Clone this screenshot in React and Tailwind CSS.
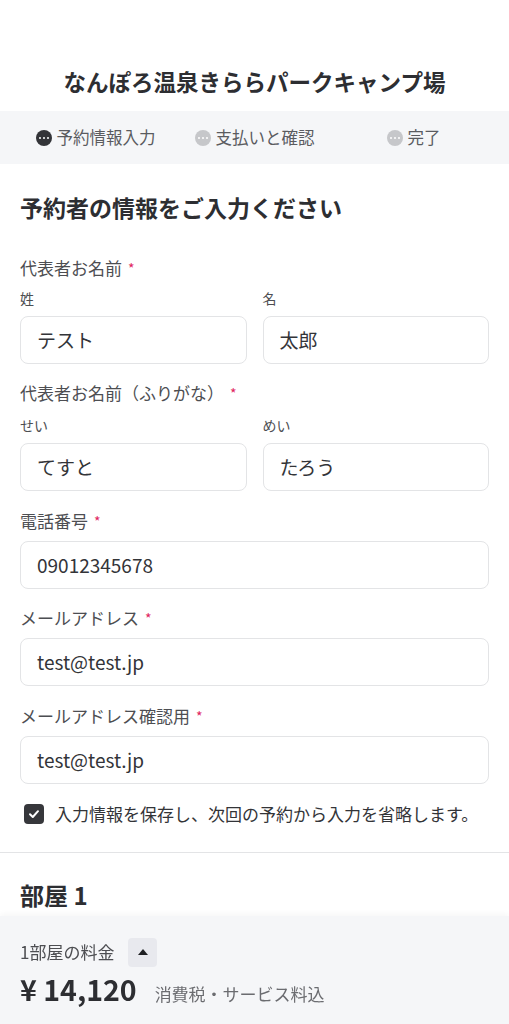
import React from "react";

const font = { fontFamily: '"Noto Sans CJK JP", "Noto Sans", sans-serif' };

function StepIcon({ active }) {
  return (
    <span
      className={
        "flex h-4 w-4 items-center justify-center gap-[2px] rounded-full " +
        (active ? "bg-[#333438]" : "bg-[#c6c7ca]")
      }
    >
      <span className="h-[2px] w-[2px] rounded-full bg-white" />
      <span className="h-[2px] w-[2px] rounded-full bg-white" />
      <span className="h-[2px] w-[2px] rounded-full bg-white" />
    </span>
  );
}

function Label({ children, className = "" }) {
  return (
    <div className={"text-[17px] leading-[24px] text-[#4d4e52] " + className}>
      {children}
      <span className="ml-[6px] text-[14px] align-top text-[#e0245e]">*</span>
    </div>
  );
}

function Input({ value }) {
  return (
    <div className="flex h-[48px] items-center rounded-lg border border-[#e3e4e6] bg-white px-4 text-[19px] text-[#333438]">
      {value}
    </div>
  );
}

function SubField({ label, value }) {
  return (
    <div className="flex-1">
      <div className="mb-[8px] text-[14px] leading-[20px] text-[#4d4e52]">{label}</div>
      <Input value={value} />
    </div>
  );
}

export default function App() {
  return (
    <div className="min-h-screen bg-white pb-[120px]" style={font}>
      <header className="pt-[64px] pb-[13px] text-center text-[22.5px] font-bold leading-[34px] text-[#2d2e32]">
        なんぽろ温泉きららパークキャンプ場
      </header>

      <nav className="grid h-[53px] grid-cols-3 items-center bg-[#f5f6f8] px-4 text-[16.5px] text-[#5a5b5f]">
        <div className="flex items-center justify-center gap-[5px]">
          <StepIcon active />
          <span>予約情報入力</span>
        </div>
        <div className="flex items-center justify-center gap-[5px]">
          <StepIcon />
          <span>支払いと確認</span>
        </div>
        <div className="flex items-center justify-center gap-[5px]">
          <StepIcon />
          <span>完了</span>
        </div>
      </nav>

      <section className="px-5 pt-[27px] pb-[26px]">
        <h2 className="text-[23px] font-bold leading-[32px] text-[#2d2e32]">
          予約者の情報をご入力ください
        </h2>

        <Label className="mt-[33px] mb-[8px]">代表者お名前</Label>
        <div className="flex gap-4">
          <SubField label="姓" value="テスト" />
          <SubField label="名" value="太郎" />
        </div>

        <Label className="mt-[17px] mb-[10px]">代表者お名前（ふりがな）</Label>
        <div className="flex gap-4">
          <SubField label="せい" value="てすと" />
          <SubField label="めい" value="たろう" />
        </div>

        <Label className="mt-[18px] mb-[8px]">電話番号</Label>
        <Input value="09012345678" />

        <Label className="mt-[17px] mb-[8px]">メールアドレス</Label>
        <Input value="test@test.jp" />

        <Label className="mt-[18px] mb-[8px]">メールアドレス確認用</Label>
        <Input value="test@test.jp" />

        <label className="mt-[18px] flex items-center gap-[11px] pl-1 text-[17px] leading-[24px] text-[#333438]">
          <span className="flex h-5 w-5 shrink-0 items-center justify-center rounded-[4px] bg-[#36373b]">
            <svg width="12" height="12" viewBox="0 0 12 12" fill="none">
              <path d="M2 6.2 4.8 9 10 3.2" stroke="white" strokeWidth="2" strokeLinecap="round" strokeLinejoin="round" />
            </svg>
          </span>
          入力情報を保存し、次回の予約から入力を省略します。
        </label>
      </section>

      <div className="border-t border-[#e3e4e6] px-5 pt-[26px]">
        <h2 className="text-[24px] font-bold leading-[32px] text-[#2d2e32]">部屋 1</h2>
      </div>

      <footer className="fixed inset-x-0 bottom-0 h-[108px] bg-[#f5f6f8] px-5 pt-[21px] shadow-[0_-2px_6px_rgba(0,0,0,0.04)]">
        <div className="flex items-center gap-[14px]">
          <span className="text-[17px] leading-[30px] text-[#4d4e52]">1部屋の料金</span>
          <button className="flex h-[29px] w-[29px] items-center justify-center rounded-[4px] bg-[#e8e9ee]">
            <svg width="12" height="8" viewBox="0 0 12 8">
              <path d="M6 1 11 7H1Z" fill="#1f2023" />
            </svg>
          </button>
        </div>
        <div className="mt-[2px] flex items-baseline gap-[18px]">
          <span className="text-[28.5px] font-bold leading-[40px] text-[#2d2e32]">¥ 14,120</span>
          <span className="text-[17px] text-[#6b6c70]">消費税・サービス料込</span>
        </div>
      </footer>
    </div>
  );
}
